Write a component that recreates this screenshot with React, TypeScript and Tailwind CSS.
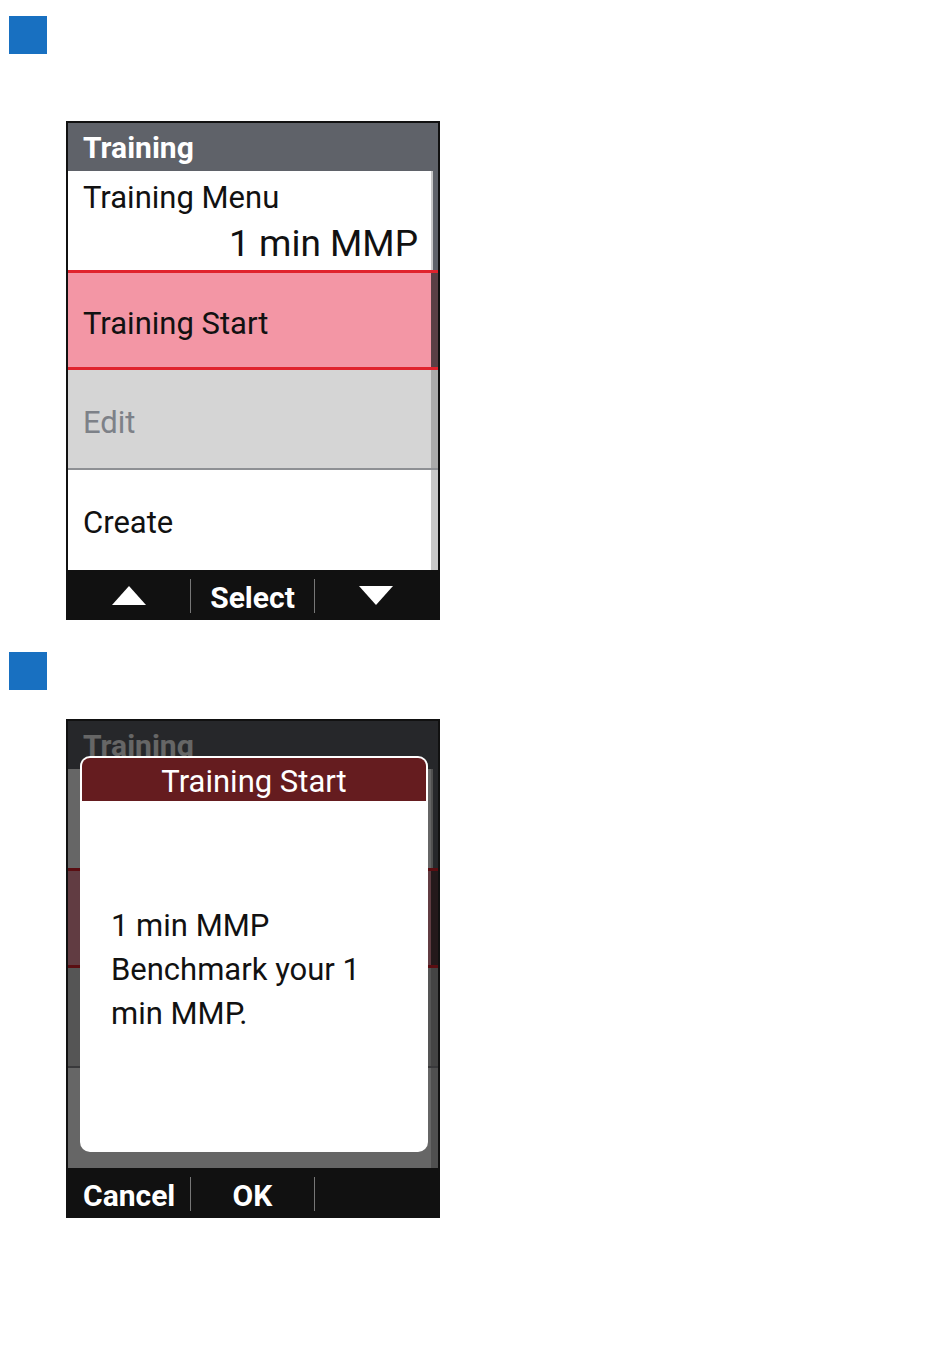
import React from "react";

const font = { fontFamily: "Roboto, 'Liberation Sans', sans-serif" };

const TriUp = () => (
  <svg width="34" height="19" viewBox="0 0 34 19">
    <polygon points="17,0 34,19 0,19" fill="#fff" />
  </svg>
);

const TriDown = () => (
  <svg width="34" height="19" viewBox="0 0 34 19">
    <polygon points="0,0 34,0 17,19" fill="#fff" />
  </svg>
);

// rows under the dialog are covered, so their labels are left out there
const MenuList: React.FC<{ covered?: boolean }> = ({ covered }) => (
  <>
    <div className="h-[48px] bg-[#5f6269] flex items-center pl-[15px] pt-[2px]">
      <span className="text-white font-bold text-[30px] leading-[36px]">Training</span>
    </div>
    <div className="h-[99px] bg-white flex">
      <div className="flex-1 pl-[15px] pr-[13px] flex flex-col">
        {!covered && (
          <>
            <span className="text-[31px] text-[#111] leading-[36px] mt-[9px]">Training Menu</span>
            <span className="text-[37px] text-[#111] leading-[42px] mt-[7px] self-end">1 min MMP</span>
          </>
        )}
      </div>
      <div className="w-[7px] border-l-2 border-[#c8c8c8] bg-[#5f6269]" />
    </div>
    <div className="h-[100px] bg-[#f396a5] border-y-[3px] border-[#e0232d] flex">
      <div className="flex-1 pl-[15px] pt-[8px] flex items-center">
        {!covered && <span className="text-[31px] text-[#111]">Training Start</span>}
      </div>
      <div className="w-[7px] bg-[#5a3f45]" />
    </div>
    <div className="h-[100px] bg-[#d5d5d5] border-b-2 border-[#8e9094] flex">
      <div className="flex-1 pl-[15px] pt-[8px] flex items-center">
        {!covered && <span className="text-[31px] text-[#7d8188]">Edit</span>}
      </div>
      <div className="w-[7px] bg-[#aaaaaa]" />
    </div>
    <div className="h-[100px] bg-white flex">
      <div className="flex-1 pl-[15px] pt-[6px] flex items-center">
        {!covered && <span className="text-[31px] text-[#111]">Create</span>}
      </div>
      <div className="w-[7px] bg-[#c8c8c8]" />
    </div>
  </>
);

const Footer: React.FC<{ left: React.ReactNode; mid: React.ReactNode; right?: React.ReactNode }> = ({ left, mid, right }) => (
  <div className="h-[48px] bg-[#111] grid grid-cols-3 items-center pt-[3px]">
    <div className="flex justify-center items-center h-[34px] border-r border-[#777]">{left}</div>
    <div className="flex justify-center items-center h-[34px] border-r border-[#777]">{mid}</div>
    <div className="flex justify-center items-center h-[34px]">{right}</div>
  </div>
);

export default function App() {
  return (
    <div className="bg-white min-h-[1365px] w-[950px] pt-[16px] pl-[9px]" style={font}>
      <div className="w-[38px] h-[38px] bg-[#1870c1]" />

      <div className="ml-[57px] mt-[67px] w-[374px] border-2 border-[#111]">
        <MenuList />
        <Footer
          left={<TriUp />}
          mid={<span className="text-white font-bold text-[30px] leading-[34px] pt-[4px]">Select</span>}
          right={<TriDown />}
        />
      </div>

      <div className="w-[38px] h-[38px] bg-[#1870c1] mt-[32px]" />

      <div className="ml-[57px] mt-[29px] w-[374px] border-2 border-[#111]">
        <div className="relative">
          <MenuList covered />
          <div className="absolute inset-0 bg-black/60" />
          <div className="absolute left-[12px] top-[35px] w-[348px] h-[396px] bg-white rounded-[10px] p-[2px] flex flex-col">
            <div className="h-[43px] bg-[#651c1f] rounded-t-[8px] flex items-center justify-center pt-[4px]">
              <span className="text-white text-[31px] leading-[36px]">Training Start</span>
            </div>
            <div className="pl-[29px] pt-[103px] text-[31px] leading-[44px] text-[#111]">
              <div>1 min MMP</div>
              <div>Benchmark your 1</div>
              <div>min MMP.</div>
            </div>
          </div>
        </div>
        <Footer
          left={<span className="text-white font-bold text-[30px] leading-[34px] pt-[4px]">Cancel</span>}
          mid={<span className="text-white font-bold text-[30px] leading-[34px] pt-[4px]">OK</span>}
        />
      </div>
    </div>
  );
}
